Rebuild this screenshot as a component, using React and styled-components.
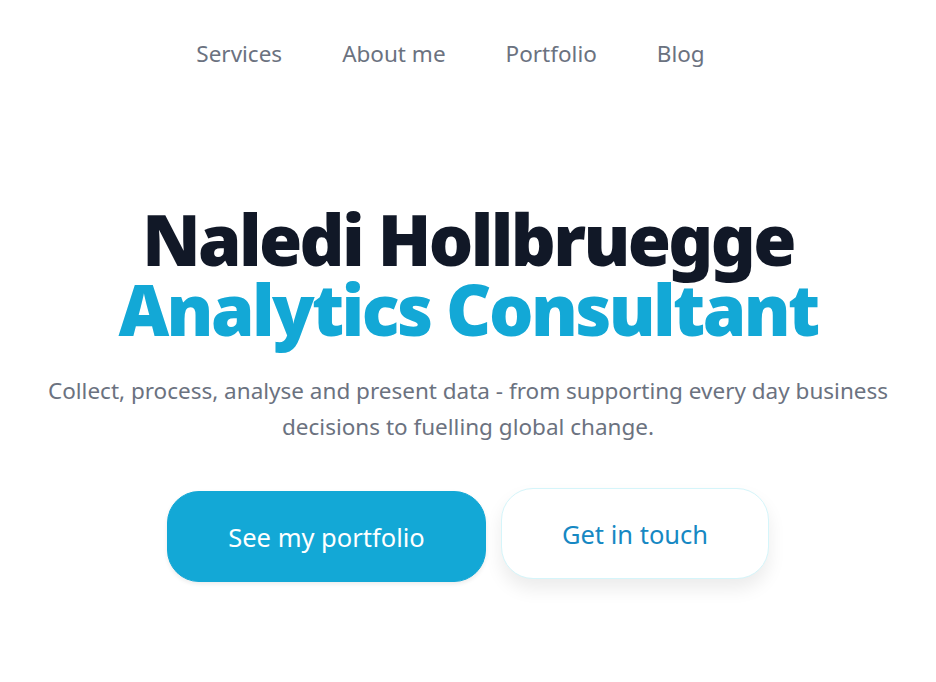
import React from "react";
import styled, { createGlobalStyle } from "styled-components";

const Global = createGlobalStyle`
  html, body { margin: 0; padding: 0; background: #ffffff; }
  body { font-family: "Noto Sans", "Open Sans", sans-serif; }
  * { box-sizing: border-box; }
`;

const Page = styled.div`
  display: flex;
  flex-direction: column;
  align-items: center;
  width: 936px;
  min-height: 682px;
`;

const Nav = styled.nav`
  display: flex;
  gap: 60px;
  padding-top: 39px;
  margin-right: 35px;
`;

const NavLink = styled.a`
  font-size: 22.5px;
  line-height: 30px;
  color: #6b7280;
  text-decoration: none;
`;

const Hero = styled.section`
  display: flex;
  flex-direction: column;
  align-items: center;
  margin-top: 135px;
`;

const Title = styled.h1`
  margin: 0;
  font-family: "Noto Sans", sans-serif;
  font-weight: 900;
  font-size: 70px;
  line-height: 70px;
  letter-spacing: -2.6px;
  text-align: center;
`;

const Line = styled.span`
  display: block;
  color: ${(p) => (p.$accent ? "#13a8d6" : "#111827")};
`;

const Lead = styled.p`
  margin: 29px 0 0;
  font-size: 22.5px;
  line-height: 36px;
  color: #6b7280;
  text-align: center;
  max-width: 900px;
`;

const Actions = styled.div`
  display: flex;
  gap: 15px;
  margin-top: 46px;
  align-items: flex-start;
`;

const Button = styled.a`
  display: flex;
  align-items: center;
  justify-content: center;
  height: 91px;
  border-radius: 32px;
  font-size: 25.5px;
  text-decoration: none;
  background: ${(p) => (p.$primary ? "#13a8d6" : "#ffffff")};
  color: ${(p) => (p.$primary ? "#ffffff" : "#1688c3")};
  border: 1px solid ${(p) => (p.$primary ? "#13a8d6" : "#d5f5fa")};
  width: ${(p) => (p.$primary ? "319px" : "268px")};
  box-shadow: ${(p) =>
    p.$primary
      ? "0 2px 4px rgba(0,0,0,0.08)"
      : "0 10px 18px rgba(0,0,0,0.08)"};
  transform: ${(p) => (p.$primary ? "none" : "translateY(-3px)")};
`;

export default function App() {
  return (
    <>
      <Global />
      <Page>
        <Nav>
          <NavLink href="#">Services</NavLink>
          <NavLink href="#">About me</NavLink>
          <NavLink href="#">Portfolio</NavLink>
          <NavLink href="#">Blog</NavLink>
        </Nav>
        <Hero>
          <Title>
            <Line>Naledi Hollbruegge</Line>
            <Line $accent>Analytics Consultant</Line>
          </Title>
          <Lead>
            Collect, process, analyse and present data - from supporting every day business
            <br />
            decisions to fuelling global change.
          </Lead>
          <Actions>
            <Button $primary href="#">See my portfolio</Button>
            <Button href="#">Get in touch</Button>
          </Actions>
        </Hero>
      </Page>
    </>
  );
}
